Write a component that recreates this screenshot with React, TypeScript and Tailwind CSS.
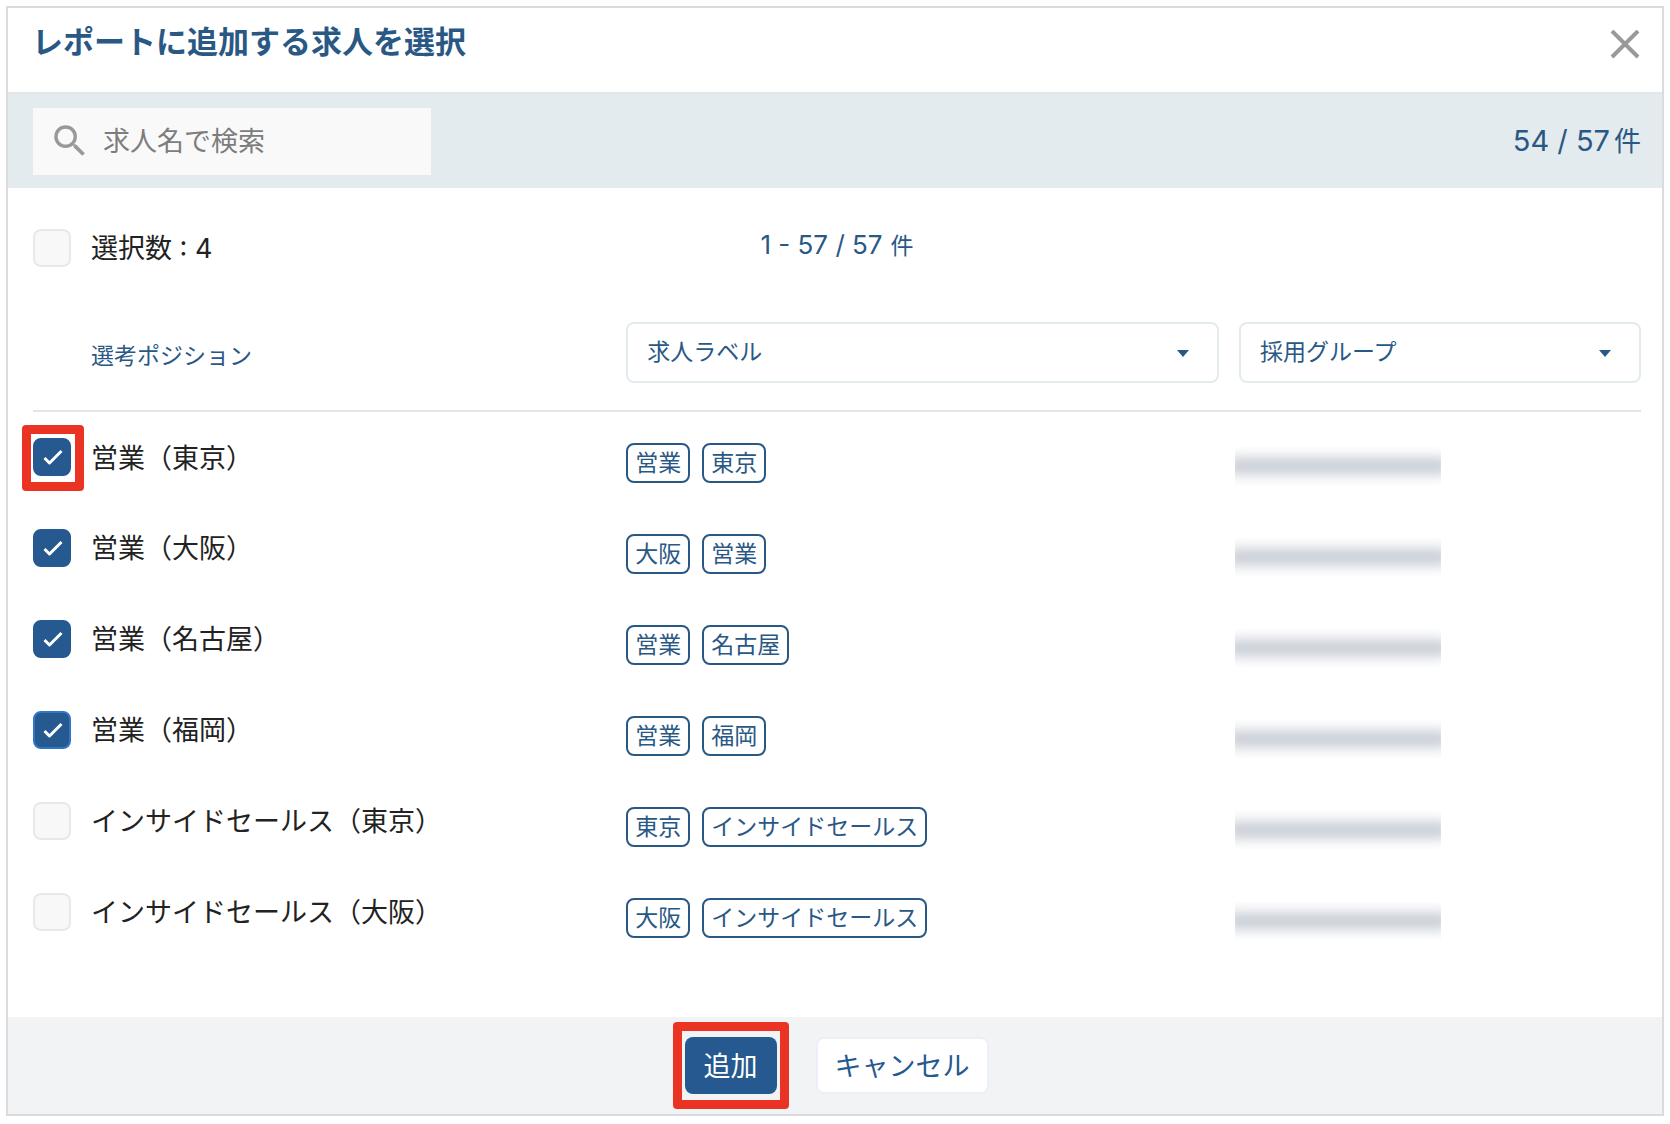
import React, { useId, useState } from 'react';
import { MdSearch } from 'react-icons/md';

interface Job {
    id: number;
    name: string;
    labels: string[];
}

const JOBS: Job[] = [
    { id: 1, name: '営業（東京）', labels: ['営業', '東京'] },
    { id: 2, name: '営業（大阪）', labels: ['大阪', '営業'] },
    { id: 3, name: '営業（名古屋）', labels: ['営業', '名古屋'] },
    { id: 4, name: '営業（福岡）', labels: ['営業', '福岡'] },
    { id: 5, name: 'インサイドセールス（東京）', labels: ['東京', 'インサイドセールス'] },
    { id: 6, name: 'インサイドセールス（大阪）', labels: ['大阪', 'インサイドセールス'] },
];

interface CheckboxProps {
    label: React.ReactNode;
    checked: boolean;
    onChange: () => void;
    focused?: boolean;
    highlighted?: boolean;
}

const Checkbox: React.FC<CheckboxProps> = ({ label, checked, onChange, focused, highlighted }) => {
    const id = useId();
    const border = focused ? 'checked:border-[#2f75c8]' : 'checked:border-[#25598f]';

    return (
        <div className="flex items-center gap-5">
            <span className="relative grid size-[38px] shrink-0 place-items-center">
                <input
                    id={id}
                    type="checkbox"
                    checked={checked}
                    onChange={onChange}
                    className={`col-start-1 row-start-1 size-full appearance-none rounded-lg border-2 border-[#e8e8e8] bg-[#f8f8f8] checked:bg-[#25598f] ${border}`}
                />
                {checked && (
                    <svg viewBox="0 0 38 38" className="pointer-events-none col-start-1 row-start-1 size-full" fill="none" stroke="#fff" strokeWidth="3">
                        <path d="M11.5 20l5 5L28.5 13" strokeLinejoin="round" />
                    </svg>
                )}
                {highlighted && <Highlight className="-left-[11px] -right-[13px] -top-[13px] -bottom-[15px]" />}
            </span>
            <label htmlFor={id} className="pt-[3px] text-[27px] leading-9 text-[#222]">{label}</label>
        </div>
    );
};

const Highlight: React.FC<{ className: string }> = ({ className }) => (
    <span className={`pointer-events-none absolute rounded border-[9px] border-[#ea3323] ${className}`} />
);

const FilterSelect: React.FC<{ label: string }> = ({ label }) => (
    <div className="relative">
        <select
            aria-label={label}
            className="block h-[61px] w-full appearance-none rounded-lg border-2 border-[#e4ebef] bg-white pl-[19px] pr-12 text-[23px] font-normal text-[#2a5885]"
        >
            <option>{label}</option>
        </select>
        <svg viewBox="0 0 12 7" className="pointer-events-none absolute right-[30px] top-7 h-[7px] w-3" fill="#2a5885">
            <path d="M0 0h12L6 7z" />
        </svg>
    </div>
);

const App: React.FC = () => {
    const [selected, setSelected] = useState<number[]>([1, 2, 3, 4]);
    const [query, setQuery] = useState('');

    const toggle = (id: number) => {
        setSelected(prev => (prev.includes(id) ? prev.filter(x => x !== id) : [...prev, id]));
    };

    const allSelected = selected.length === JOBS.length;
    const toggleAll = () => setSelected(allSelected ? [] : JOBS.map(j => j.id));

    return (
        <div className="flex min-h-screen bg-white px-[6px] pt-[6px] pb-2 font-[Inter,'Noto_Sans_CJK_JP',sans-serif] text-[#2a5885]">
            <div role="dialog" aria-labelledby="dialog-title" className="flex flex-1 flex-col border-2 border-[#dadbdc]">
                <header className="flex h-[84px] items-start justify-between pl-6 pr-5 pt-[14px]">
                    <h1 id="dialog-title" className="text-[31px] leading-10 font-bold">レポートに追加する求人を選択</h1>
                    <button aria-label="閉じる" className="mt-2 size-8">
                        <svg viewBox="0 0 32 32" className="size-8" stroke="#999" strokeWidth="4">
                            <path d="M2 1l26 26M28 1L2 27" />
                        </svg>
                    </button>
                </header>

                <div className="flex h-24 items-center justify-between border-t-2 border-[#e4e6e7] bg-[#e4ebee] pl-[25px] pr-[21px]">
                    <label className="flex h-[67px] w-[398px] items-center gap-3 bg-[#f9f9f9] pl-4">
                        <MdSearch className="size-[42px] shrink-0 text-[#999]" />
                        <input
                            type="text"
                            value={query}
                            onChange={e => setQuery(e.target.value)}
                            placeholder="求人名で検索"
                            aria-label="求人名で検索"
                            className="w-full min-w-0 bg-transparent pt-[2px] text-[27px] outline-none placeholder:text-[#7d7d7d]"
                        />
                    </label>
                    <p className="flex items-baseline gap-1 text-[27px]">
                        <span className="text-[29px]">54 / 57</span>件
                    </p>
                </div>

                <main className="flex-1 pl-[25px] pr-[21px] pt-10">
                    <div className="grid grid-cols-[1fr_auto_1fr] items-center">
                        <Checkbox label={`選択数 : ${selected.length}`} checked={allSelected} onChange={toggleAll} />
                        <p className="flex items-baseline gap-2 pb-1 text-[23px] leading-8">
                            <span className="text-[26px]">1 - 57 / 57</span>件
                        </p>
                    </div>

                    <table className="mt-[55px] w-full table-fixed text-left">
                        <thead>
                            <tr className="border-b-2 border-[#e5e5e5]">
                                <th className="w-[36.9%] pb-5 pl-[58px] text-[23px] font-normal">選考ポジション</th>
                                <th className="pr-5 pb-[27px]"><FilterSelect label="求人ラベル" /></th>
                                <th className="w-1/4 pb-[27px]"><FilterSelect label="採用グループ" /></th>
                            </tr>
                        </thead>
                        <tbody>
                            {JOBS.map((job, index) => (
                                <tr key={job.id} className="h-[91px]">
                                    <td>
                                        <Checkbox
                                            label={job.name}
                                            checked={selected.includes(job.id)}
                                            onChange={() => toggle(job.id)}
                                            focused={job.id === 4}
                                            highlighted={index === 0}
                                        />
                                    </td>
                                    <td className="pt-3">
                                        <div className="flex gap-3">
                                            {job.labels.map(label => (
                                                <span key={label} className="rounded-lg border-2 border-[#2a5885] px-[7px] text-[23px] leading-9">{label}</span>
                                            ))}
                                        </div>
                                    </td>
                                    <td className="pt-[18px]">
                                        {/* group name is masked */}
                                        <div className="-ml-1 flex h-[38px] w-[206px] items-center overflow-hidden">
                                            <div className="-mx-2 h-4 flex-1 bg-[#c3c9d1] blur-[7px]" />
                                        </div>
                                    </td>
                                </tr>
                            ))}
                        </tbody>
                    </table>
                </main>

                <footer className="flex h-[97px] items-center justify-center gap-[39px] bg-[#f1f3f5] pl-[3px]">
                    <div className="relative">
                        <button className="block h-[57px] rounded-lg bg-[#25598f] px-[19px] pt-[3px] text-[27px] text-white">追加</button>
                        <Highlight className="-inset-x-3 -inset-y-[15px]" />
                    </div>
                    <button className="h-[57px] rounded-lg border-2 border-[#eceff7] bg-white px-[17px] pt-[3px] text-[27px] text-[#25598f]">キャンセル</button>
                </footer>
            </div>
        </div>
    );
};

export default App;
